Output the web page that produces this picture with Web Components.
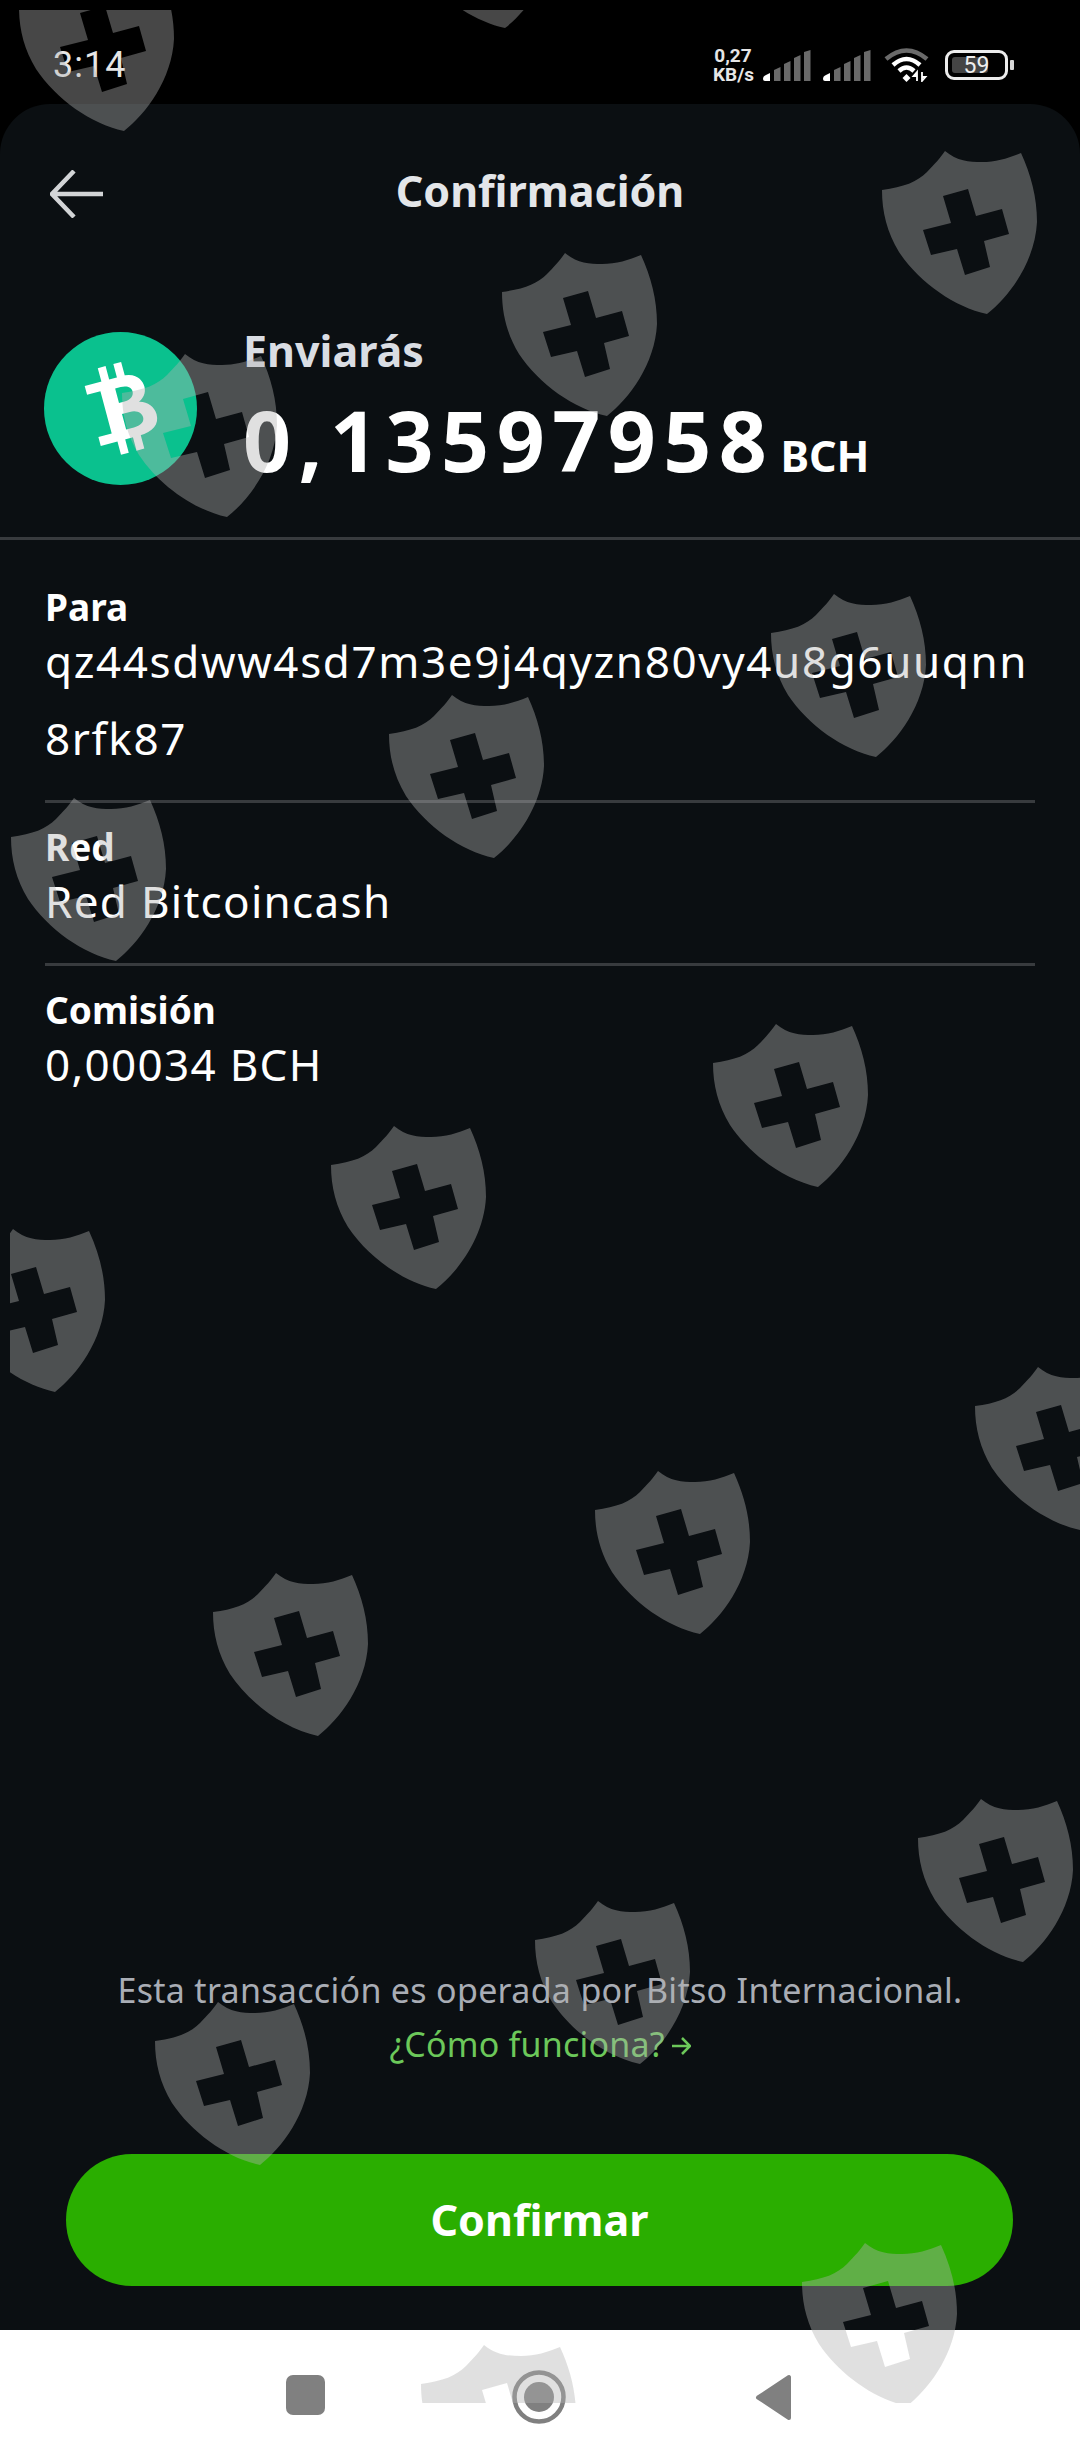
<!DOCTYPE html>
<html lang="es">
<head>
<meta charset="utf-8">
<title>Confirmación</title>
<style>
  html, body { margin: 0; padding: 0; background: #000; }
</style>
</head>
<body>
<app-screen>
  <status-bar time="3:14" speed="0,27" battery="59"></status-bar>
  <confirm-card>
    <top-bar>Confirmación</top-bar>
    <amount-head label="Enviarás" amount="0,13597958" unit="BCH"></amount-head>
    <detail-list>
      <detail-row address><span slot="label">Para</span>qz44sdww4sd7m3e9j4qyzn80vy4u8g6uuqnn8rfk87</detail-row>
      <detail-row><span slot="label">Red</span>Red Bitcoincash</detail-row>
      <detail-row plain><span slot="label">Comisión</span>0,00034 BCH</detail-row>
    </detail-list>
    <confirm-footer slot="footer" note="Esta transacción es operada por Bitso Internacional." link="¿Cómo funciona?" action="Confirmar"></confirm-footer>
  </confirm-card>
  <nav-bar></nav-bar>
  <shield-overlay></shield-overlay>
</app-screen>

<script>
const SANS = "'Noto Sans', 'DejaVu Sans', sans-serif";

class AppScreen extends HTMLElement {
  connectedCallback() {
    if (this.shadowRoot) return;
    this.attachShadow({ mode: 'open' }).innerHTML = `
      <style>
        :host {
          display: flex;
          flex-direction: column;
          position: relative;
          width: 1080px;
          height: 2460px;
          overflow: hidden;
          background: #000;
          font-family: ${SANS};
        }
      </style>
      <slot></slot>
    `;
  }
}

class StatusBar extends HTMLElement {
  connectedCallback() {
    if (this.shadowRoot) return;
    const bars = `
      <path d="M0 29q0-3 3-4l4-2v8H2q-2 0-2-2z" fill="#fff"/>
      <path d="M11 20l6.500-3v14H11z" fill="#6a6a6a"/>
      <path d="M21 14l6.500-3v20H21z" fill="#6a6a6a"/>
      <path d="M31 8l6.500-3v26H31z" fill="#6a6a6a"/>
      <path d="M41 2l6.500-2v31H41z" fill="#6a6a6a"/>`;
    this.attachShadow({ mode: 'open' }).innerHTML = `
      <style>
        :host {
          display: flex;
          align-items: center;
          flex: none;
          box-sizing: border-box;
          height: 104px;
          padding: 26px 66px 0 53px;
          color: #e6e6e6;
          font-family: Roboto, sans-serif;
        }
        .time { font-size: 36px; line-height: 78px; letter-spacing: 1px; }
        .right { display: flex; align-items: center; margin-left: auto; }
        .speed { width: 40px; font-size: 19px; line-height: 19px; font-weight: 700; text-align: center; margin-right: 10px; }
        svg { display: block; }
        .sig2 { margin-left: 12px; }
        .wifi { margin-left: 13px; }
        .batt {
          position: relative;
          display: flex;
          align-items: center;
          justify-content: center;
          box-sizing: border-box;
          width: 63px;
          height: 30px;
          margin-left: 16px;
          border: 3px solid #ececec;
          border-radius: 9px;
          font-size: 23px;
          color: #eee;
        }
        .level { position: absolute; left: 4px; top: 4px; bottom: 4px; width: 36px; background: #444; border-radius: 3px; }
        .num { position: relative; }
        .nub { width: 4px; height: 10px; margin-left: 2px; background: #d8d8d8; border-radius: 1px; }
      </style>
      <span class="time">${this.getAttribute('time')}</span>
      <div class="right">
        <div class="speed"><div>${this.getAttribute('speed')}</div><div>KB/s</div></div>
        <svg width="48" height="31" viewBox="0 0 48 31">${bars}</svg>
        <svg class="sig2" width="48" height="31" viewBox="0 0 48 31">${bars}</svg>
        <svg class="wifi" width="45" height="34" viewBox="0 0 45 34" fill="none" stroke-width="4.500">
          <path d="M2 11Q22.500-6 43 11" stroke="#6a6a6a"/>
          <path d="M9 17Q22.500 5 36 17" stroke="#fff"/>
          <path d="M15 23Q22.500 16 30 23" stroke="#fff"/>
          <path d="M22.500 26l4 4-4 4-4-4z" fill="#fff" stroke="none"/>
          <path d="M33 24v9M33 24l-3.500 4h3.500zM38 33v-9M38 33l3.500-4H38z" stroke="#fff" stroke-width="1.800"/>
        </svg>
        <div class="batt"><span class="level"></span><span class="num">${this.getAttribute('battery')}</span></div>
        <div class="nub"></div>
      </div>
    `;
  }
}

class ConfirmCard extends HTMLElement {
  connectedCallback() {
    if (this.shadowRoot) return;
    this.attachShadow({ mode: 'open' }).innerHTML = `
      <style>
        :host {
          display: flex;
          flex-direction: column;
          flex: 1;
          min-height: 0;
          background: #0b0f12;
          border-radius: 50px 50px 0 0;
        }
        .foot { margin-top: auto; }
      </style>
      <slot></slot>
      <div class="foot"><slot name="footer"></slot></div>
    `;
  }
}

class TopBar extends HTMLElement {
  connectedCallback() {
    if (this.shadowRoot) return;
    this.attachShadow({ mode: 'open' }).innerHTML = `
      <style>
        :host {
          display: grid;
          grid-template-columns: 1fr auto 1fr;
          align-items: center;
          padding: 57px 50px 0;
        }
        svg { display: block; margin-top: 6px; }
        h1 { margin: 0; font-size: 43px; line-height: 60px; font-weight: 700; color: #e4e6e9; }
      </style>
      <svg width="54" height="48" viewBox="0 0 54 48" fill="none" stroke="#d2d4d6" stroke-width="4.500">
        <path d="M53 24H3M24 1L2 24l22 23"/>
      </svg>
      <h1><slot></slot></h1>
      <span></span>
    `;
  }
}

class AmountHead extends HTMLElement {
  connectedCallback() {
    if (this.shadowRoot) return;
    this.attachShadow({ mode: 'open' }).innerHTML = `
      <style>
        :host {
          display: flex;
          align-items: flex-start;
          box-sizing: border-box;
          height: 217px;
          margin-top: 102px;
          padding-left: 44px;
          border-bottom: 3px solid #383b3e;
        }
        svg { display: block; flex: none; margin: 9px 46px 0 0; }
        .text { padding-top: 3px; }
        .label { font-size: 43px; line-height: 50px; font-weight: 700; color: #dadde3; }
        .amount { margin-top: 14px; font-size: 84px; line-height: 100px; font-weight: 700; color: #fff; letter-spacing: 7.500px; white-space: nowrap; }
        .unit { font-size: 43px; letter-spacing: 0; margin-left: 6px; }
      </style>
      <svg width="153" height="153" viewBox="-76.500 -76.500 153 153">
        <circle r="76.500" fill="#0ac18e"/>
        <g transform="rotate(-15) scale(1.150)" fill="#fff" fill-rule="evenodd">
          <path d="M-25-27H8C22-27 25-18 25-13C25-7 21-3 17-1.500C24 0 29 6 29 13C29 22 22 27 10 27H-25V19H-13V-19H-25Z
                   M0-18V-5H5C11-5 14-8 14-12C14-15 11-18 5-18Z
                   M0 5V19H7C14 19 17 16 17 12.500C17 9 14 5 7 5Z"/>
          <path d="M-10-39h7v13h-7zM4-39h7v13H4zM-10 26h7v13h-7zM4 26h7v13H4z"/>
        </g>
      </svg>
      <div class="text">
        <div class="label">${this.getAttribute('label')}</div>
        <div class="amount">${this.getAttribute('amount')}<span class="unit">${this.getAttribute('unit')}</span></div>
      </div>
    `;
  }
}

class DetailList extends HTMLElement {
  connectedCallback() {
    if (this.shadowRoot) return;
    this.attachShadow({ mode: 'open' }).innerHTML = `
      <style>
        :host { display: block; margin: 0 45px; padding-top: 23px; }
      </style>
      <slot></slot>
    `;
  }
}

class DetailRow extends HTMLElement {
  connectedCallback() {
    if (this.shadowRoot) return;
    this.attachShadow({ mode: 'open' }).innerHTML = `
      <style>
        :host {
          display: block;
          padding: 27px 0 23px;
          border-bottom: 3px solid #383b3e;
          color: #fff;
        }
        :host([plain]) { border-bottom: 0; }
        .label { font-size: 37px; line-height: 34px; font-weight: 700; }
        .value { margin-top: -1px; font-size: 44px; line-height: 77px; letter-spacing: 1.300px; word-break: break-all; }
        :host([address]) .value { letter-spacing: 1.620px; }
      </style>
      <div class="label"><slot name="label"></slot></div>
      <div class="value"><slot></slot></div>
    `;
  }
}

class ConfirmFooter extends HTMLElement {
  connectedCallback() {
    if (this.shadowRoot) return;
    this.attachShadow({ mode: 'open' }).innerHTML = `
      <style>
        :host {
          display: flex;
          flex-direction: column;
          align-items: center;
          padding-bottom: 44px;
          font-size: 34px;
          line-height: 54px;
          text-align: center;
        }
        .note { color: #a9adb5; letter-spacing: .3px; }
        .link { display: flex; align-items: center; gap: 6px; color: #6cc85a; letter-spacing: .2px; }
        .link svg { display: block; margin-top: 4px; }
        .btn {
          display: flex;
          align-items: center;
          justify-content: center;
          box-sizing: border-box;
          width: 947px;
          height: 132px;
          margin: 83px 0 0 -1px;
          border-radius: 66px;
          background: #2aae00;
          color: #fff;
          font-size: 43px;
          line-height: 60px;
          font-weight: 700;
        }
      </style>
      <div class="note">${this.getAttribute('note')}</div>
      <div class="link">${this.getAttribute('link')}
        <svg width="20" height="20" viewBox="0 0 20 20" fill="none" stroke="#6cc85a" stroke-width="2.500"><path d="M1 10h17M11 2l8 8-8 8"/></svg>
      </div>
      <div class="btn">${this.getAttribute('action')}</div>
    `;
  }
}

class NavBar extends HTMLElement {
  connectedCallback() {
    if (this.shadowRoot) return;
    this.attachShadow({ mode: 'open' }).innerHTML = `
      <style>
        :host {
          display: flex;
          align-items: center;
          flex: none;
          box-sizing: border-box;
          height: 130px;
          padding-left: 286px;
          background: #fff;
        }
        .sq { width: 39px; height: 40px; background: #808080; border-radius: 7px; }
        .home { margin: 4px 0 0 187px; display: block; }
        .back { margin: 4px 0 0 189px; display: block; }
      </style>
      <div class="sq"></div>
      <svg class="home" width="54" height="54" viewBox="0 0 54 54">
        <circle cx="27" cy="27" r="24.500" fill="none" stroke="#808080" stroke-width="4.500"/>
        <circle cx="27" cy="27" r="15" fill="#808080"/>
      </svg>
      <svg class="back" width="37" height="47" viewBox="0 0 37 47">
        <path d="M34 3v41L3 23.500z" fill="#808080" stroke="#808080" stroke-width="4" stroke-linejoin="round"/>
      </svg>
    `;
  }
}

// watermark: same shield repeated over everything, clipped to the capture window
const SHIELD_SPOTS = [
  [6, -46], [387, -149], [869, 137], [489, 239], [109, 340], [758, 580], [376, 681], [-2, 784],
  [700, 1010], [318, 1112], [-63, 1215], [962, 1353], [582, 1457], [200, 1559], [905, 1785],
  [522, 1887], [142, 1988], [789, 2229], [408, 2331]
];

class ShieldOverlay extends HTMLElement {
  connectedCallback() {
    if (this.shadowRoot) return;
    const shapes = SHIELD_SPOTS.map(([x, y]) =>
      `<use href="#shield" transform="translate(${x - 10} ${y - 10})"/>`).join('');
    this.attachShadow({ mode: 'open' }).innerHTML = `
      <style>
        :host {
          position: absolute;
          left: 10px;
          top: 10px;
          width: 1070px;
          height: 2393px;
          overflow: hidden;
          pointer-events: none;
        }
        svg { display: block; }
      </style>
      <svg width="1070" height="2393" viewBox="0 0 1070 2393">
        <defs>
          <path id="shield" fill="rgb(177,177,177)" fill-opacity=".4" fill-rule="evenodd"
            d="M76 14C88 24 100 25 113 25C127 25 140 21 152 16C162 38 168 60 168 85C166 125 140 160 118 177C85 170 50 145 30 115C18 95 13 75 13 53C35 50 48 45 58 35C65 28 72 20 76 14Z
               M74 59L99 52L107 79L133 72L140 97L115 104L121 130L96 138L88 112L62 118L54 93L82 86Z"/>
        </defs>
        ${shapes}
      </svg>
    `;
  }
}

customElements.define('app-screen', AppScreen);
customElements.define('status-bar', StatusBar);
customElements.define('confirm-card', ConfirmCard);
customElements.define('top-bar', TopBar);
customElements.define('amount-head', AmountHead);
customElements.define('detail-list', DetailList);
customElements.define('detail-row', DetailRow);
customElements.define('confirm-footer', ConfirmFooter);
customElements.define('nav-bar', NavBar);
customElements.define('shield-overlay', ShieldOverlay);
</script>
</body>
</html>
